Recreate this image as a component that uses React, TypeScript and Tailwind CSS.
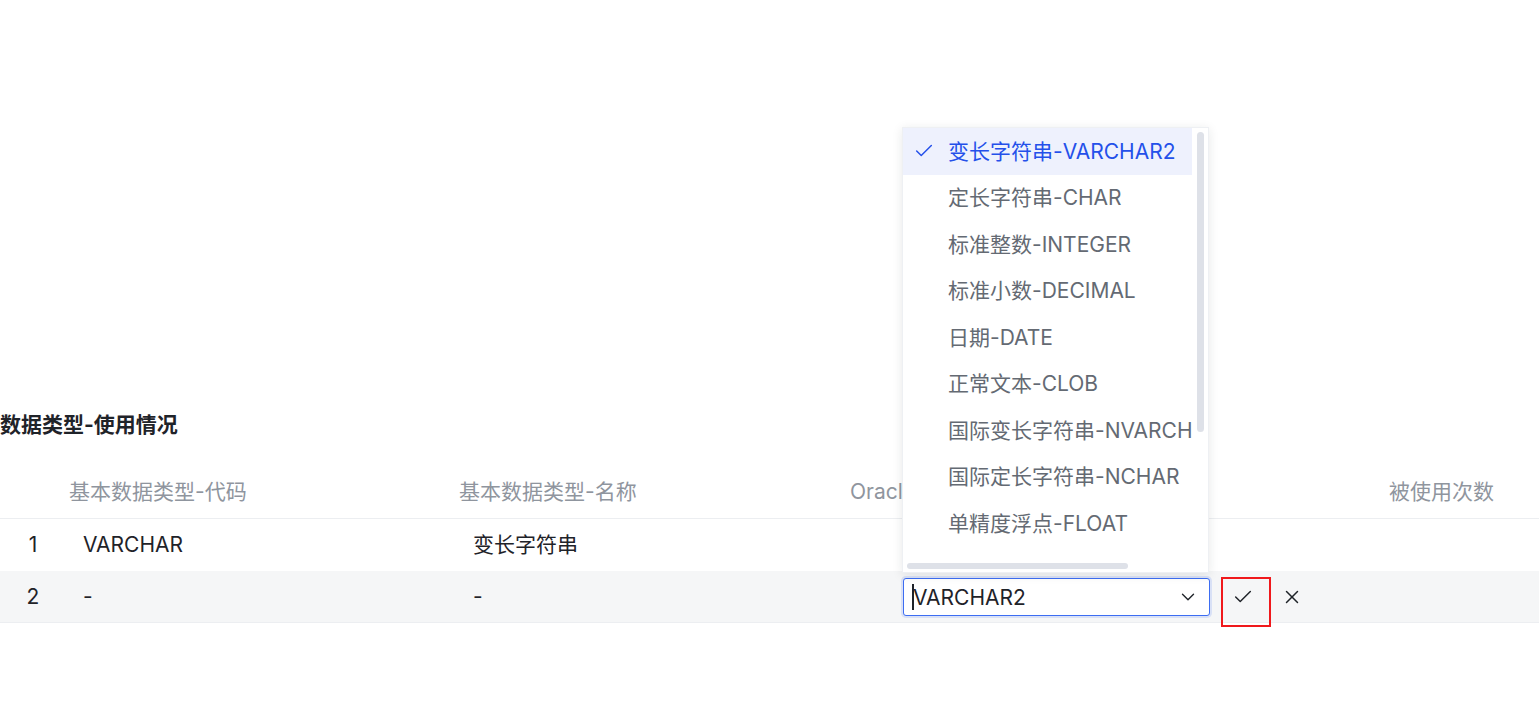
import { Check, ChevronDown, X } from 'lucide-react';

const options = [
  '变长字符串-VARCHAR2',
  '定长字符串-CHAR',
  '标准整数-INTEGER',
  '标准小数-DECIMAL',
  '日期-DATE',
  '正常文本-CLOB',
  '国际变长字符串-NVARCHAR2',
  '国际定长字符串-NCHAR',
  '单精度浮点-FLOAT',
];

const cols = 'grid grid-cols-[66px_390px_391px_539px_1fr]';

function Dropdown() {
  return (
    <div className="absolute z-10 left-[-2px] bottom-[calc(100%+6px)] w-[307px] h-[446px] bg-white border border-[#eef0f3] shadow-[0_2px_10px_rgba(31,35,41,0.10)] flex">
      <div className="w-[290px] flex flex-col overflow-hidden">
        <div className="flex flex-col">
          {options.map((opt, i) => (
            <div
              key={opt}
              className={
                'h-[46.5px] flex items-center whitespace-nowrap text-[21px] ' +
                (i === 0 ? 'bg-[#eef1fd] text-[#2450ea]' : 'text-[#646a73]')
              }
            >
              <span className="w-[45px] pl-[10px] flex items-center shrink-0">
                {i === 0 && <Check size={22} strokeWidth={1.6} className="text-[#2450ea]" />}
              </span>
              <span>{opt}</span>
            </div>
          ))}
        </div>
        <div className="mt-auto mb-[3px] ml-[4px] w-[221px] h-[6px] rounded-full bg-[#dee1e8]" />
      </div>
      <div className="w-[16px] flex justify-center pt-[4px]">
        <div className="w-[7px] h-[300px] rounded-full bg-[#dee1e8]" />
      </div>
    </div>
  );
}

export default function App() {
  return (
    <div
      className="w-full h-[705px] bg-white overflow-hidden text-[#1f2329]"
      style={{ fontFamily: 'Inter, "Noto Sans CJK SC", sans-serif' }}
    >
      <div className="pt-[410px]">
        <h2 className="text-[21px] leading-[30px] font-bold text-[#1f2329]">数据类型-使用情况</h2>

        <div className={cols + ' mt-[26px] h-[53px] items-center border-b border-[#eceef1] text-[21px] text-[#8f959e]'}>
          <div />
          <div className="pl-[3px]">基本数据类型-代码</div>
          <div className="pl-[3px]">基本数据类型-名称</div>
          <div className="pl-[3px] whitespace-nowrap">Oracle数据类型</div>
          <div className="pl-[3px]">被使用次数</div>
        </div>

        <div className={cols + ' h-[52px] items-center text-[21px]'}>
          <div className="text-center">1</div>
          <div className="pl-[17px]">VARCHAR</div>
          <div className="pl-[17px]">变长字符串</div>
          <div />
          <div />
        </div>

        <div className={cols + ' h-[52px] items-center text-[21px] bg-[#f5f6f7] border-b border-[#eceef1]'}>
          <div className="text-center">2</div>
          <div className="pl-[17px]">-</div>
          <div className="pl-[17px]">-</div>
          <div />
          <div />
        </div>
      </div>

      <div className="relative -mt-[52px] ml-[903px] h-[52px] flex items-center">
        <div className="relative w-[307px] h-[38px] border border-[#3d6df2] rounded-[3px] ring-2 ring-[#3d6df2]/15 bg-white flex items-center pl-[8px] pr-[10px]">
          <Dropdown />
          <span className="w-[2px] h-[26px] bg-[#1f2329]" />
          <span className="text-[21px] leading-none -ml-[1px]">VARCHAR2</span>
          <ChevronDown size={22} strokeWidth={1.5} className="ml-auto text-[#1f2329]" />
        </div>
        <button className="ml-[11px] mt-[9px] w-[50px] h-[50px] border-2 border-[#f0191c] flex items-center justify-center pr-[6px] pb-[9px]">
          <Check size={22} strokeWidth={1.6} className="text-[#1f2329]" />
        </button>
        <X size={22} strokeWidth={1.6} className="ml-[10px] text-[#1f2329]" />
      </div>
    </div>
  );
}
